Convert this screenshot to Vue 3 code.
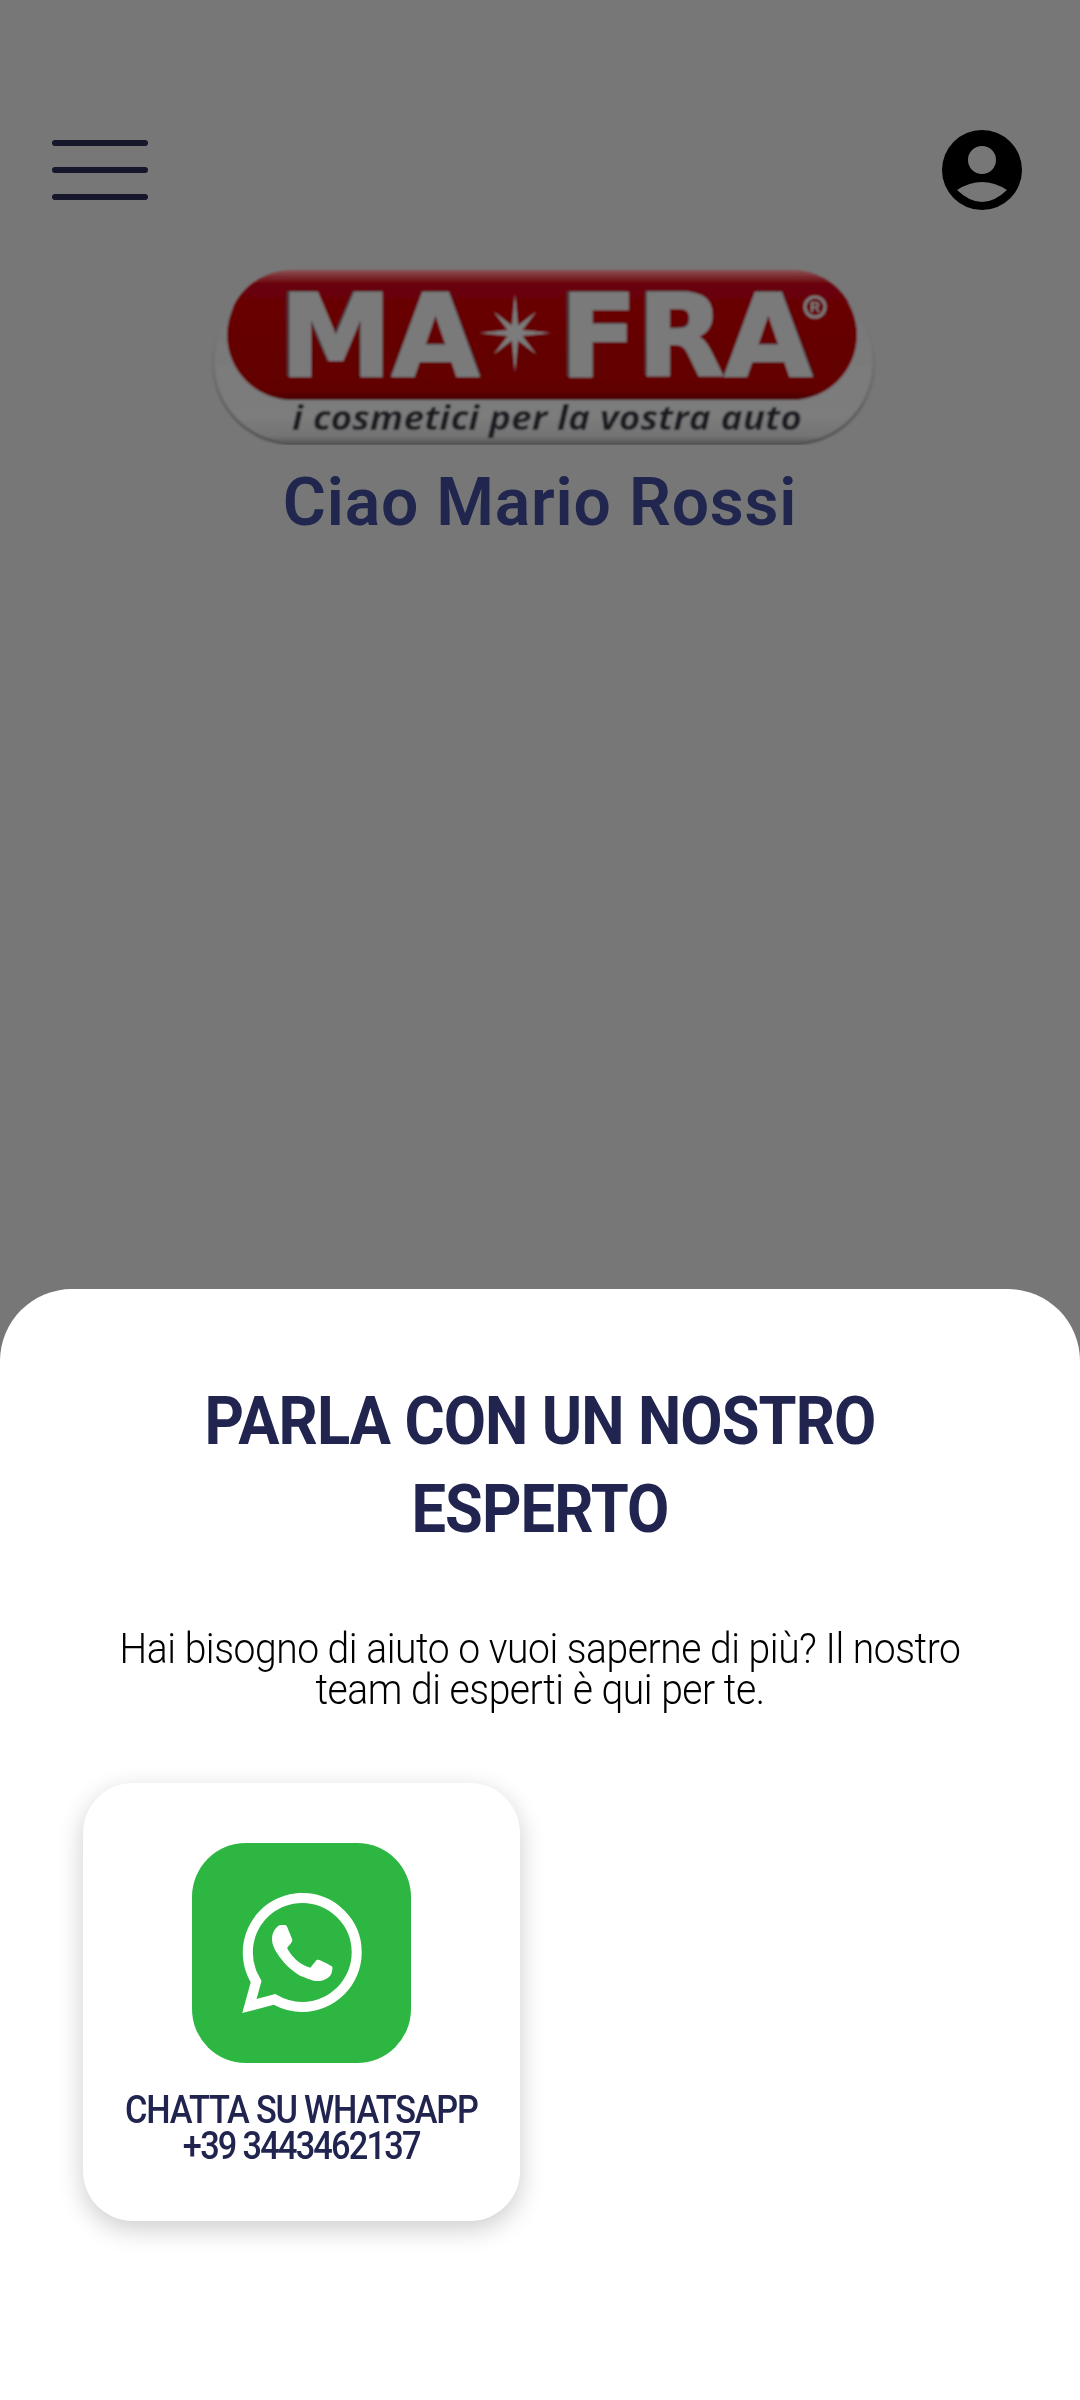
<script setup>
// Eight-pointed star between the two halves of the wordmark
const cx = 515
const cy = 333
const outer = [40, 30, 36, 30, 40, 30, 36, 30]
const starPoints = outer
  .flatMap((r, i) => {
    const a = (i * Math.PI) / 4 - Math.PI / 2
    const b = a + Math.PI / 8
    return [
      `${(cx + r * Math.cos(a)).toFixed(1)},${(cy + r * Math.sin(a)).toFixed(1)}`,
      `${(cx + 8 * Math.cos(b)).toFixed(1)},${(cy + 8 * Math.sin(b)).toFixed(1)}`
    ]
  })
  .join(' ')
</script>

<template>
  <div class="page">
    <section class="backdrop">
      <header class="topbar">
        <button class="menu" aria-label="Menu">
          <span></span><span></span><span></span>
        </button>
        <svg class="avatar" viewBox="0 0 80 80" aria-label="Profilo">
          <path
            fill-rule="evenodd"
            d="M40 0a40 40 0 1 0 0 80a40 40 0 1 0 0-80zM40 16a14 14 0 1 1 0 28a14 14 0 1 1 0-28zM15 60Q40 44 65 60Q40 84 15 60z"
          />
        </svg>
      </header>

      <svg class="logo" viewBox="204 268 672 177" role="img" aria-label="MA-FRA">
        <defs>
          <linearGradient id="rim" x1="0" y1="0" x2="0" y2="1">
            <stop offset="0" stop-color="#777" />
            <stop offset="0.82" stop-color="#7d7d7d" />
            <stop offset="0.95" stop-color="#747474" />
            <stop offset="1" stop-color="#565656" />
          </linearGradient>
          <linearGradient id="rimEdge" x1="0" y1="0" x2="0" y2="1">
            <stop offset="0.3" stop-color="#777" />
            <stop offset="0.7" stop-color="#686868" />
            <stop offset="1" stop-color="#525252" />
          </linearGradient>
          <linearGradient id="red" x1="0" y1="0" x2="0" y2="1">
            <stop offset="0" stop-color="#8c5154" />
            <stop offset="0.11" stop-color="#690107" />
            <stop offset="0.92" stop-color="#620005" />
            <stop offset="1" stop-color="#4a0003" />
          </linearGradient>
          <filter id="soft" x="-5%" y="-5%" width="110%" height="110%">
            <feGaussianBlur stdDeviation="0.9" />
          </filter>
        </defs>
        <g filter="url(#soft)">
          <rect x="213" y="282" width="661" height="162" rx="81" fill="url(#rim)" stroke="url(#rimEdge)" stroke-width="3" />
          <rect x="227" y="270" width="630" height="130" rx="65" fill="url(#red)" />

          <g class="mark mark-shade">
            <text x="277" y="375" textLength="203" lengthAdjust="spacingAndGlyphs">MA</text>
            <text x="557" y="375" textLength="256" lengthAdjust="spacingAndGlyphs">FRA</text>
          </g>
          <g class="mark">
            <text x="280" y="376" textLength="199" lengthAdjust="spacingAndGlyphs">MA</text>
            <text x="560" y="376" textLength="252" lengthAdjust="spacingAndGlyphs">FRA</text>
          </g>
          <polygon :points="starPoints" fill="#7c7c7c" />
          <circle cx="815" cy="307" r="10" fill="none" stroke="#7a7a7a" stroke-width="3" />
          <text class="reg" x="815" y="312" text-anchor="middle">R</text>

          <text class="tagline" x="292" y="430" textLength="510" lengthAdjust="spacingAndGlyphs">
            i cosmetici per la vostra auto
          </text>
        </g>
      </svg>

      <h2 class="greeting">Ciao Mario Rossi</h2>
    </section>

    <section class="sheet">
      <h1 class="sheet-title">PARLA CON UN NOSTRO<br />ESPERTO</h1>
      <p class="sheet-text">
        Hai bisogno di aiuto o vuoi saperne di più? Il nostro<br />team di esperti è qui per te.
      </p>

      <div class="contacts">
        <a class="contact-card">
          <span class="wa-tile">
            <svg class="wa-glyph" viewBox="0 0 24 24" aria-hidden="true">
              <path
                fill="#fff"
                d="M17.472 14.382c-.297-.149-1.758-.867-2.03-.967-.273-.099-.471-.148-.67.15-.197.297-.767.966-.94 1.164-.173.199-.347.223-.644.075-.297-.15-1.255-.463-2.39-1.475-.883-.788-1.48-1.761-1.653-2.059-.173-.297-.018-.458.13-.606.134-.133.298-.347.446-.52.149-.174.198-.298.298-.497.099-.198.05-.371-.025-.52-.075-.149-.669-1.612-.916-2.207-.242-.579-.487-.5-.669-.51-.173-.008-.371-.01-.57-.01-.198 0-.52.074-.792.372-.272.297-1.04 1.016-1.04 2.479 0 1.462 1.065 2.875 1.213 3.074.149.198 2.096 3.2 5.077 4.487.709.306 1.262.489 1.694.625.712.227 1.36.195 1.871.118.571-.085 1.758-.719 2.006-1.413.248-.694.248-1.289.173-1.413-.074-.124-.272-.198-.57-.347m-5.421 7.403h-.004a9.87 9.87 0 01-5.031-1.378l-.361-.214-3.741.982.998-3.648-.235-.374a9.86 9.86 0 01-1.51-5.26c.001-5.45 4.436-9.884 9.888-9.884 2.64 0 5.122 1.03 6.988 2.898a9.825 9.825 0 012.893 6.994c-.003 5.45-4.437 9.884-9.885 9.884m8.413-18.297A11.815 11.815 0 0012.05 0C5.495 0 .16 5.335.157 11.892c0 2.096.547 4.142 1.588 5.945L.057 24l6.305-1.654a11.882 11.882 0 005.683 1.448h.005c6.554 0 11.89-5.335 11.893-11.893a11.821 11.821 0 00-3.48-8.413z"
              />
            </svg>
          </span>
          <span class="contact-label">CHATTA SU WHATSAPP<br /><span class="contact-phone">+39 3443462137</span></span>
        </a>
      </div>
    </section>
  </div>
</template>

<style scoped>
.page {
  width: 1080px;
  height: 2400px;
  display: flex;
  flex-direction: column;
  background: #777;
  font-family: Roboto, "Liberation Sans", sans-serif;
  overflow: hidden;
}

.backdrop {
  flex: 1;
  display: flex;
  flex-direction: column;
  align-items: center;
  background: #777;
}

.topbar {
  width: 100%;
  box-sizing: border-box;
  padding: 130px 58px 0 52px;
  display: flex;
  justify-content: space-between;
  align-items: center;
}

.menu {
  width: 96px;
  display: flex;
  flex-direction: column;
  gap: 21px;
  padding: 0;
  border: 0;
  background: none;
}

.menu span {
  display: block;
  height: 6px;
  border-radius: 3px;
  background: #16172a;
}

.avatar {
  width: 80px;
  height: 80px;
  fill: #000;
}

.logo {
  display: block;
  width: 672px;
  height: 177px;
  margin-top: 58px;
}

.mark text {
  font-family: "DejaVu Sans", sans-serif;
  font-weight: 700;
  font-size: 114px;
  fill: #7a7a7a;
  stroke: #7a7a7a;
  stroke-width: 2px;
}

.mark-shade text {
  fill: #463236;
  stroke: #463236;
}

.reg {
  font-family: "Liberation Sans", sans-serif;
  font-size: 14px;
  font-weight: 700;
  fill: #7a7a7a;
}

.tagline {
  font-family: "Open Sans", sans-serif;
  font-style: italic;
  font-weight: 700;
  font-size: 34px;
  fill: #1c1c22;
}

.greeting {
  margin: 19px 0 0;
  font-size: 66px;
  line-height: 77px;
  font-weight: 600;
  letter-spacing: 0.8px;
  color: #21264f;
}

.sheet {
  height: 1111px;
  box-sizing: border-box;
  flex: none;
  padding-top: 89px;
  background: #fff;
  border-radius: 72px 72px 0 0;
  text-align: center;
}

/* The headline and body copy run narrower than Roboto's natural set width */
.sheet-title {
  margin: 0;
  font-size: 66px;
  line-height: 88px;
  font-weight: 700;
  letter-spacing: -1px;
  color: #20244f;
  transform: scaleX(0.93);
}

.sheet-text {
  margin: 74px 0 0;
  font-size: 42px;
  line-height: 41px;
  font-weight: 300;
  letter-spacing: -0.5px;
  color: #000;
  transform: scaleX(0.93);
}

.contacts {
  margin-top: 73px;
  padding-left: 83px;
  display: flex;
}

.contact-card {
  width: 437px;
  height: 438px;
  box-sizing: border-box;
  padding-top: 60px;
  display: flex;
  flex-direction: column;
  align-items: center;
  background: #fff;
  border-radius: 50px;
  box-shadow: 0 8px 26px rgba(0, 0, 0, 0.2);
}

.wa-tile {
  width: 219px;
  height: 220px;
  flex: none;
  display: flex;
  align-items: center;
  justify-content: center;
  background: #2db742;
  border-radius: 54px;
}

.wa-glyph {
  width: 120px;
  height: 120px;
}

.contact-label {
  margin-top: 29px;
  font-size: 39px;
  line-height: 36px;
  font-weight: 500;
  letter-spacing: -1.4px;
  white-space: nowrap;
  text-align: center;
  color: #20244f;
  transform: scaleX(0.88);
}

.contact-phone {
  letter-spacing: -2px;
}
</style>
